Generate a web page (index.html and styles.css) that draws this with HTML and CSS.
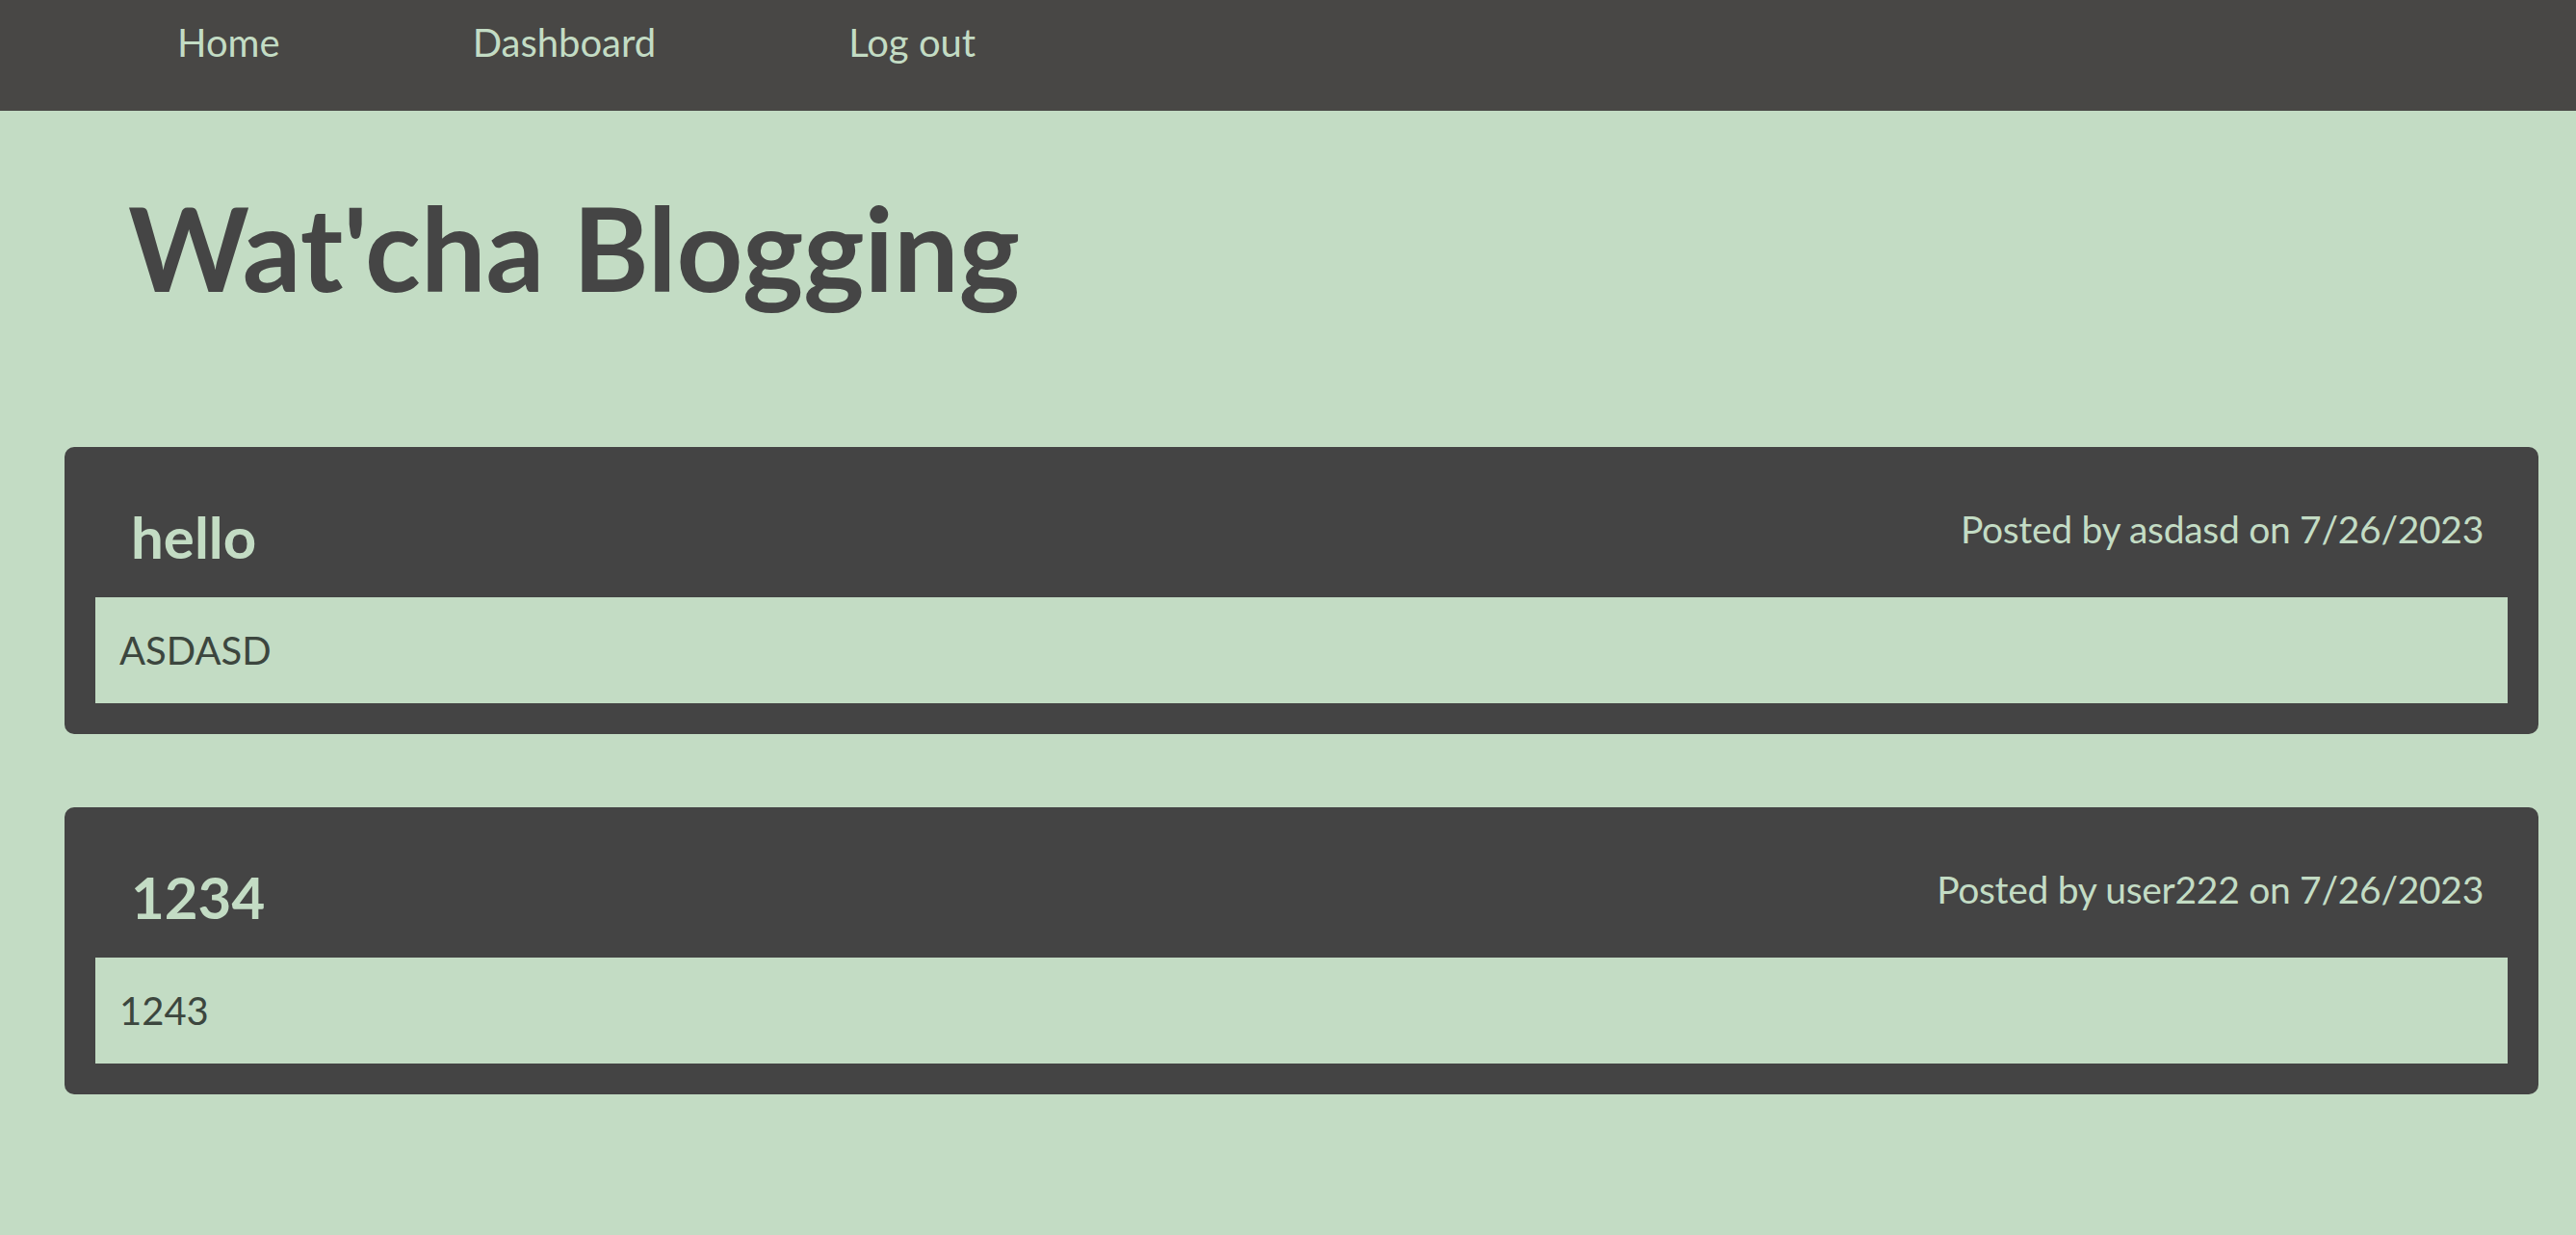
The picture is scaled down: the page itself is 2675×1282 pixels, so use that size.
FILE: index.html
```html
<!DOCTYPE html>
<html lang="en">
<head>
<meta charset="utf-8">
<title>Wat'cha Blogging</title>
<link rel="stylesheet" href="styles.css">
</head>
<body>
<nav class="nav">
  <a class="nav-link" href="#">Home</a>
  <a class="nav-link" href="#">Dashboard</a>
  <a class="nav-link" href="#">Log out</a>
</nav>
<header class="hero">
  <h1 class="hero-title">Wat'cha Blogging</h1>
</header>
<main class="posts">
  <article class="post">
    <div class="post-head">
      <h2 class="post-title">hello</h2>
      <p class="post-meta">Posted by asdasd on 7/26/2023</p>
    </div>
    <div class="post-body">ASDASD</div>
  </article>
  <article class="post">
    <div class="post-head">
      <h2 class="post-title">1234</h2>
      <p class="post-meta">Posted by user222 on 7/26/2023</p>
    </div>
    <div class="post-body">1243</div>
  </article>
</main>
</body>
</html>
```
FILE: styles.css
```css
html, body {
  margin: 0;
  padding: 0;
}
body {
  background: #c3dcc4;
  font-family: Lato, "Open Sans", sans-serif;
  min-height: 1282px;
}
.nav {
  background: #484745;
  height: 115px;
  box-sizing: border-box;
  display: flex;
  align-items: flex-start;
  padding: 20px 0 0 184px;
  gap: 200px;
}
.nav-link {
  color: #c3dcc4;
  text-decoration: none;
  font-size: 40px;
  line-height: 48px;
}
.hero {
  padding: 69px 0 0 133px;
}
.hero-title {
  margin: 0;
  font-size: 120px;
  font-weight: 700;
  line-height: 146px;
  color: #454545;
}
.posts {
  margin: 134px 39px 0 67px;
  display: flex;
  flex-direction: column;
  gap: 76px;
}
.post {
  background: #444444;
  border-radius: 10px;
  padding: 32px;
}
.post-head {
  height: 124px;
  display: flex;
  justify-content: space-between;
  align-items: flex-start;
  padding: 0 25px 0 37px;
}
.post-title {
  margin: 25px 0 0;
  font-size: 60px;
  line-height: 72px;
  font-weight: 700;
  color: #c3dcc4;
}
.post-meta {
  margin: 29px 0 0;
  font-size: 39px;
  line-height: 48px;
  letter-spacing: -0.3px;
  color: #c3dcc4;
}
.post-body {
  background: #c3dcc4;
  color: #3c463e;
  font-size: 40px;
  line-height: 48px;
  padding: 31px 25px;
}
```
